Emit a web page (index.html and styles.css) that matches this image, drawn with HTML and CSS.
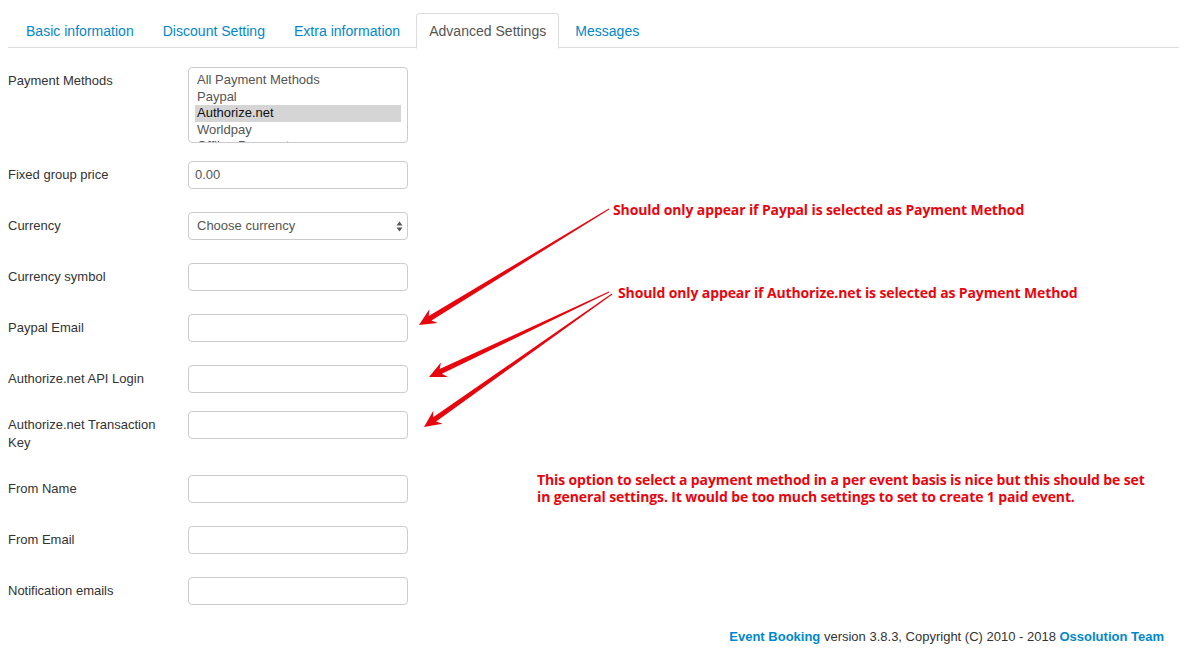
FILE: index.html
```html
<!DOCTYPE html>
<html>
<head>
<meta charset="utf-8">
<link rel="stylesheet" href="styles.css">
</head>
<body>
<ul class="tabs">
  <li><a>Basic information</a></li>
  <li><a>Discount Setting</a></li>
  <li><a>Extra information</a></li>
  <li class="active"><a>Advanced Settings</a></li>
  <li><a>Messages</a></li>
</ul>
<div class="form">
  <div class="row tight">
    <div class="label">Payment Methods</div>
    <div class="multi">
      <div class="opt">All Payment Methods</div>
      <div class="opt">Paypal</div>
      <div class="opt sel">Authorize.net</div>
      <div class="opt">Worldpay</div>
      <div class="opt">Offline Payment</div>
    </div>
  </div>
  <div class="row">
    <div class="label">Fixed group price</div>
    <div class="input">0.00</div>
  </div>
  <div class="row">
    <div class="label">Currency</div>
    <div class="input select">Choose currency
      <svg class="updown" width="7" height="11" viewBox="0 0 7 11"><path d="M3.5 0.5 L6.5 4.5 L0.5 4.5 Z M0.5 6.5 L6.5 6.5 L3.5 10.5 Z" fill="#555"/></svg>
    </div>
  </div>
  <div class="row">
    <div class="label">Currency symbol</div>
    <div class="input"></div>
  </div>
  <div class="row">
    <div class="label">Paypal Email</div>
    <div class="input"></div>
  </div>
  <div class="row tight">
    <div class="label">Authorize.net API Login</div>
    <div class="input"></div>
  </div>
  <div class="row">
    <div class="label">Authorize.net Transaction Key</div>
    <div class="input"></div>
  </div>
  <div class="row">
    <div class="label">From Name</div>
    <div class="input"></div>
  </div>
  <div class="row">
    <div class="label">From Email</div>
    <div class="input"></div>
  </div>
  <div class="row">
    <div class="label">Notification emails</div>
    <div class="input"></div>
  </div>
</div>
<div class="footer"><a>Event Booking</a> version 3.8.3, Copyright (C) 2010 - 2018 <a>Ossolution Team</a></div>

<svg class="arrows" width="1187" height="669" viewBox="0 0 1187 669">
  <g fill="#e8060e">
    <polygon transform="translate(419 325) rotate(148.6)" points="-222.6,-0.5 -13,-2.6 -17,-8 0,0 -17,8 -13,2.6 -222.6,0.5"/>
    <polygon transform="translate(429 377) rotate(154.72)" points="-199.1,-0.5 -13,-2.6 -17,-8 0,0 -17,8 -13,2.6 -199.1,0.5"/>
    <polygon transform="translate(424 427) rotate(144.73)" points="-230.3,-0.5 -13,-2.6 -17,-8 0,0 -17,8 -13,2.6 -230.3,0.5"/>
  </g>
</svg>
<div class="note note1">Should only appear if Paypal is selected as Payment Method</div>
<div class="note note2">Should only appear if Authorize.net is selected as Payment Method</div>
<div class="note note3">This option to select a payment method in a per event basis is nice but this should be set<br>in general settings. It would be too much settings to set to create 1 paid event.</div>
</body>
</html>
```
FILE: styles.css
```css
html, body {
  margin: 0;
  padding: 0;
  background: #fff;
}
body {
  margin: 8px;
  font-family: "Liberation Sans", Arial, sans-serif;
  font-size: 13px;
  line-height: 18px;
  color: #333;
  position: relative;
}
.tabs {
  list-style: none;
  box-sizing: border-box;
  width: calc(100% + 8px);
  margin: 5px 0 0 0;
  padding: 0 0 0 5px;
  display: flex;
  border-bottom: 1px solid #ddd;
  height: 35px;
}
.tabs li {
  margin-right: 3px;
  margin-bottom: -1px;
}
.tabs a {
  display: block;
  padding: 8px 12px;
  font-size: 14px;
  letter-spacing: 0.02px;
  line-height: 18px;
  color: #0088cc;
  border: 1px solid transparent;
  border-radius: 4px 4px 0 0;
}
.tabs .active a {
  color: #555;
  background: #fff;
  border-color: #ddd #ddd transparent;
}
.form {
  margin-top: 19px;
}
.row {
  display: flex;
  align-items: flex-start;
  margin-bottom: 23px;
}
.row.tight {
  margin-bottom: 18px;
}
.label {
  width: 160px;
  margin-right: 20px;
  padding-top: 5px;
  color: #333;
}
.input {
  box-sizing: border-box;
  width: 220px;
  height: 28px;
  border: 1px solid #ccc;
  border-radius: 4px;
  padding: 4px 6px;
  color: #555;
  position: relative;
}
.select {
  padding-left: 8px;
}
.updown {
  position: absolute;
  right: 4px;
  top: 8px;
}
.multi {
  box-sizing: border-box;
  width: 220px;
  height: 76px;
  border: 1px solid #ccc;
  border-radius: 4px;
  padding: 4px 6px 0 6px;
  overflow: hidden;
  color: #555;
}
.opt {
  height: 16.6px;
  line-height: 16.6px;
  padding-left: 2px;
}
.opt.sel {
  background: #d5d5d5;
  color: #111;
}
.footer {
  text-align: right;
  padding-right: 15px;
  margin-top: 23px;
  color: #333;
}
.footer a {
  color: #0088cc;
  font-weight: bold;
}
.arrows {
  position: absolute;
  left: -8px;
  top: -8px;
}
.note {
  position: absolute;
  font-family: "Open Sans", sans-serif;
  font-weight: bold;
  font-size: 14px;
  letter-spacing: -0.12px;
  line-height: 17px;
  color: #e8060e;
  white-space: nowrap;
}
.note1 { left: 605px; top: 193px; }
.note2 { left: 610px; top: 276px; }
.note3 { left: 529px; top: 463px; }
```
